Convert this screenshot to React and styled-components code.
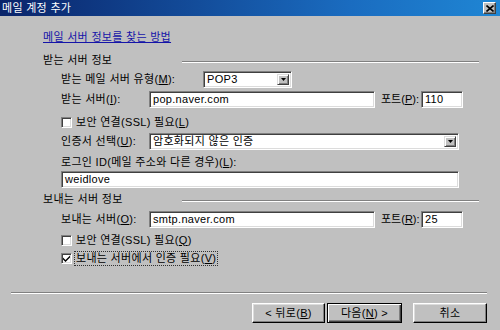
import React from 'react';
import styled, { createGlobalStyle } from 'styled-components';

const FONT = `"Liberation Sans", "Noto Sans CJK KR", sans-serif`;

const Global = createGlobalStyle`
  html, body { margin: 0; padding: 0; background: #c0c0c0; }
  body { width: 500px; height: 330px; overflow: hidden; }
`;

const Window = styled.div`
  width: 500px;
  height: 330px;
  background: #c0c0c0;
  display: flex;
  flex-direction: column;
  font-family: ${FONT};
  font-size: 11px;
  letter-spacing: 0.3px;
  line-height: 1;
  color: #000;
`;

const TitleBar = styled.div`
  height: 16px;
  flex: none;
  display: flex;
  align-items: center;
  justify-content: space-between;
  padding: 0 4px 0 2px;
  background: linear-gradient(to right, #0a246a 0%, #1a6cc0 70%, #1f86d4 100%);
  color: #fff;
`;

const TitleText = styled.span`
  font-size: 11px;
`;

const CloseBtn = styled.div`
  width: 13px;
  height: 12px;
  box-sizing: border-box;
  background: #c0c0c0;
  border-top: 1px solid #fff;
  border-left: 1px solid #fff;
  border-right: 1px solid #404040;
  border-bottom: 1px solid #404040;
  box-shadow: inset -1px -1px #808080;
  display: flex;
  align-items: center;
  justify-content: center;
`;

const Body = styled.div`
  display: flex;
  flex-direction: column;
  padding: 0 21px 0 43px;
`;

const Row = styled.div`
  display: flex;
  align-items: center;
  height: ${(p) => p.$h}px;
  margin-top: ${(p) => p.$mt}px;
  padding-left: ${(p) => (p.$indent ? 18 : 0)}px;
`;

const Link = styled.a`
  color: #1414a8;
  text-decoration: underline;
  cursor: pointer;
`;

const SectionLabel = styled.span`
  width: 139px;
  flex: none;
`;

const GrooveLine = styled.div`
  flex: 1;
  height: 0;
  margin-top: 3px;
  border-top: 1px solid #808080;
  border-bottom: 1px solid #fff;
`;

const Label = styled.span`
  width: ${(p) => (p.$w ? `${p.$w}px` : 'auto')};
  flex: none;
  white-space: nowrap;
`;

const U = styled.span`
  text-decoration: underline;
`;

const Field = styled.div`
  box-sizing: border-box;
  width: ${(p) => p.$w}px;
  height: 17px;
  flex: none;
  background: #fff;
  border-top: 1px solid #808080;
  border-left: 1px solid #808080;
  border-right: 1px solid #fff;
  border-bottom: 1px solid #fff;
  box-shadow: inset 1px 1px #404040, inset -1px -1px #dcdcdc;
  display: flex;
  align-items: center;
  padding: 0 2px 0 3px;
  white-space: nowrap;
  overflow: hidden;
`;

const FieldText = styled.span`
  flex: 1;
`;

const DropBtn = styled.div`
  width: 12px;
  height: 11px;
  box-sizing: border-box;
  flex: none;
  background: #c0c0c0;
  border-top: 1px solid #dcdcdc;
  border-left: 1px solid #dcdcdc;
  border-right: 1px solid #404040;
  border-bottom: 1px solid #404040;
  box-shadow: inset 1px 1px #fff, inset -1px -1px #808080;
  display: flex;
  align-items: center;
  justify-content: center;
`;

const PortLabel = styled.span`
  margin-left: 6px;
  width: 40px;
  flex: none;
  white-space: nowrap;
  letter-spacing: 0;
`;

const CheckBox = styled.div`
  box-sizing: border-box;
  width: 11px;
  height: 11px;
  flex: none;
  background: #fff;
  border-top: 1px solid #808080;
  border-left: 1px solid #808080;
  border-right: 1px solid #fff;
  border-bottom: 1px solid #fff;
  box-shadow: inset 1px 1px #404040, inset -1px -1px #dcdcdc;
  display: flex;
  align-items: center;
  justify-content: center;
`;

const CheckLabel = styled.span`
  margin-left: ${(p) => (p.$focus ? 3 : 4)}px;
  padding: ${(p) => (p.$focus ? '1px 1px' : '0')};
  outline: ${(p) => (p.$focus ? '1px dotted #303030' : 'none')};
  white-space: nowrap;
`;

const Footer = styled.div`
  display: flex;
  flex-direction: column;
  padding: 0 13px 0 11px;
  margin-top: 26px;
`;

const Separator = styled.div`
  height: 0;
  border-top: 1px solid #808080;
  border-bottom: 1px solid #fff;
`;

const ButtonRow = styled.div`
  display: flex;
  justify-content: flex-end;
  margin-top: 9px;
`;

const Button = styled.div`
  box-sizing: border-box;
  width: ${(p) => p.$w}px;
  height: 20px;
  margin-left: ${(p) => p.$ml}px;
  background: #c0c0c0;
  display: flex;
  align-items: center;
  justify-content: center;
  white-space: nowrap;
  border: 1px solid ${(p) => (p.$default ? '#000' : 'transparent')};
  border-top-color: ${(p) => (p.$default ? '#000' : '#fff')};
  border-left-color: ${(p) => (p.$default ? '#000' : '#fff')};
  border-right-color: #000;
  border-bottom-color: #000;
  box-shadow: ${(p) =>
    p.$default
      ? 'inset 1px 1px #fff, inset -1px -1px #404040, inset -2px -2px #808080'
      : 'inset -1px -1px #808080, inset 1px 1px #dcdcdc'};
`;

const Arrow = () => (
  <svg width="5" height="3" viewBox="0 0 5 3">
    <path d="M0 0h5L2.5 3z" fill="#000" />
  </svg>
);

const Check = () => (
  <svg width="7" height="7" viewBox="0 0 7 7">
    <path d="M0 2.5l2.5 2.5L7 0.5v2L2.5 7 0 4.5z" fill="#000" />
  </svg>
);

const XIcon = () => (
  <svg width="8" height="7" viewBox="0 0 8 7">
    <path d="M0.5 0.5l7 6M7.5 0.5l-7 6" stroke="#000" strokeWidth="1.6" />
  </svg>
);

export default function App() {
  return (
    <>
      <Global />
      <Window>
        <TitleBar>
          <TitleText>메일 계정 추가</TitleText>
          <CloseBtn>
            <XIcon />
          </CloseBtn>
        </TitleBar>
        <Body>
          <Row $mt={15} $h={12}>
            <Link>메일 서버 정보를 찾는 방법</Link>
          </Row>
          <Row $mt={11} $h={12}>
            <SectionLabel>받는 서버 정보</SectionLabel>
            <GrooveLine />
          </Row>
          <Row $mt={5} $h={17} $indent>
            <Label $w={142}>
              받는 메일 서버 유형(<U>M</U>):
            </Label>
            <Field $w={89}>
              <FieldText>POP3</FieldText>
              <DropBtn>
                <Arrow />
              </DropBtn>
            </Field>
          </Row>
          <Row $mt={3} $h={17} $indent>
            <Label $w={88}>
              받는 서버(<U>I</U>):
            </Label>
            <Field $w={226}>
              <FieldText>pop.naver.com</FieldText>
            </Field>
            <PortLabel>
              포트(<U>P</U>):
            </PortLabel>
            <Field $w={42}>
              <FieldText>110</FieldText>
            </Field>
          </Row>
          <Row $mt={6} $h={17} $indent>
            <CheckBox />
            <CheckLabel>
              보안 연결(SSL) 필요(<U>L</U>)
            </CheckLabel>
          </Row>
          <Row $mt={2} $h={17} $indent>
            <Label $w={88}>
              인증서 선택(<U>U</U>):
            </Label>
            <Field $w={310}>
              <FieldText>암호화되지 않은 인증</FieldText>
              <DropBtn>
                <Arrow />
              </DropBtn>
            </Field>
          </Row>
          <Row $mt={4} $h={16} $indent>
            <Label>
              로그인 ID(메일 주소와 다른 경우)(<U>L</U>):
            </Label>
          </Row>
          <Row $mt={1} $h={17} $indent>
            <Field $w={398}>
              <FieldText>weidlove</FieldText>
            </Field>
          </Row>
          <Row $mt={5} $h={12}>
            <SectionLabel>보내는 서버 정보</SectionLabel>
            <GrooveLine />
          </Row>
          <Row $mt={6} $h={17} $indent>
            <Label $w={88}>
              보내는 서버(<U>O</U>):
            </Label>
            <Field $w={226}>
              <FieldText>smtp.naver.com</FieldText>
            </Field>
            <PortLabel>
              포트(<U>R</U>):
            </PortLabel>
            <Field $w={42}>
              <FieldText>25</FieldText>
            </Field>
          </Row>
          <Row $mt={4} $h={16} $indent>
            <CheckBox />
            <CheckLabel>
              보안 연결(SSL) 필요(<U>Q</U>)
            </CheckLabel>
          </Row>
          <Row $mt={2} $h={16} $indent>
            <CheckBox>
              <Check />
            </CheckBox>
            <CheckLabel $focus>
              보내는 서버에서 인증 필요(<U>V</U>)
            </CheckLabel>
          </Row>
        </Body>
        <Footer>
          <Separator />
          <ButtonRow>
            <Button $w={73} $ml={0}>
              &lt; 뒤로(<U>B</U>)
            </Button>
            <Button $w={75} $ml={2} $default>
              다음(<U>N</U>) &gt;
            </Button>
            <Button $w={74} $ml={11}>
              취소
            </Button>
          </ButtonRow>
        </Footer>
      </Window>
    </>
  );
}
